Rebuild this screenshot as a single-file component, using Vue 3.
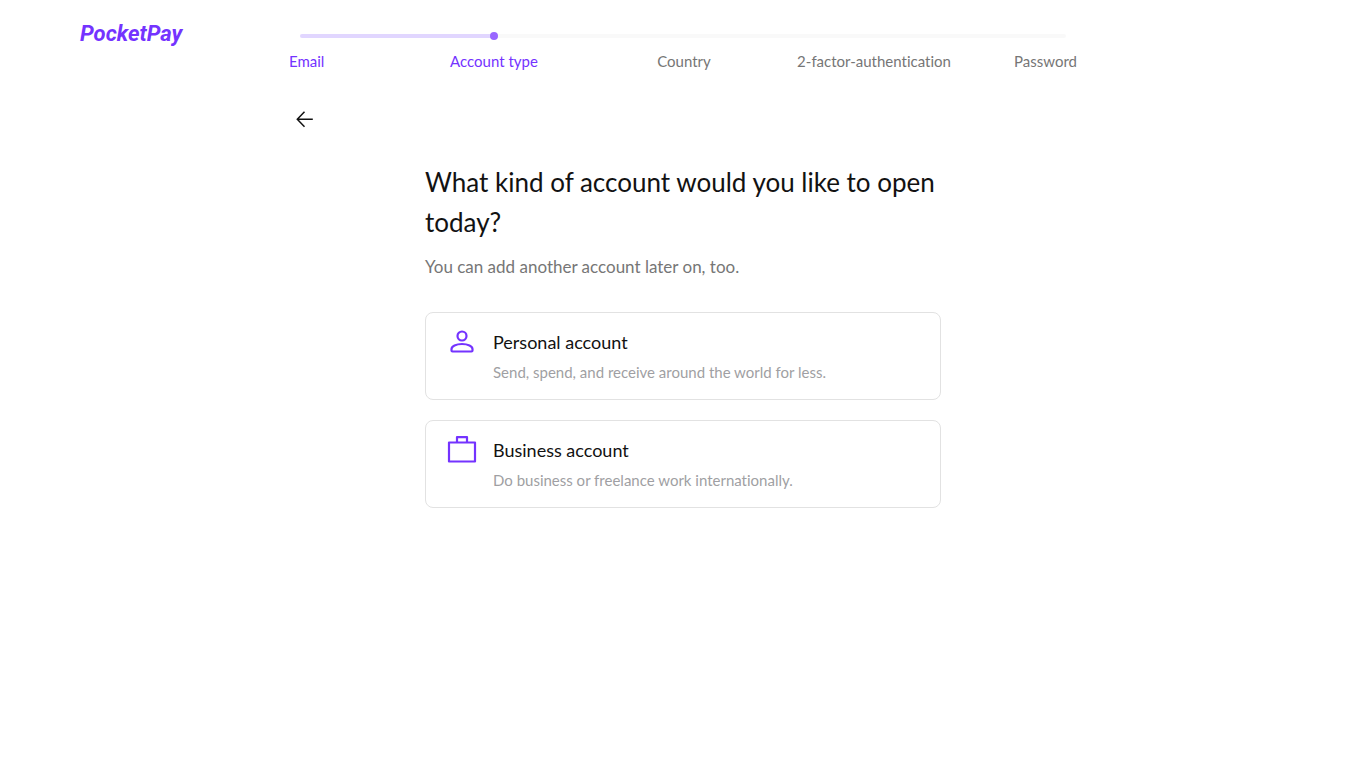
<script setup>
const steps = [
  { label: 'Email', active: true },
  { label: 'Account type', active: true },
  { label: 'Country', active: false },
  { label: '2-factor-authentication', active: false },
  { label: 'Password', active: false },
]

const accounts = [
  { id: 'personal', title: 'Personal account', text: 'Send, spend, and receive around the world for less.' },
  { id: 'business', title: 'Business account', text: 'Do business or freelance work internationally.' },
]
</script>

<template>
  <div class="page">
    <header class="header">
      <a class="logo" href="#">PocketPay</a>
      <nav class="stepper" aria-label="Progress">
        <div class="track">
          <div class="fill"></div>
        </div>
        <ol class="steps">
          <li v-for="step in steps" :key="step.label" class="step" :class="{ active: step.active }">{{ step.label }}</li>
        </ol>
      </nav>
    </header>

    <div class="toolbar">
      <button class="back" type="button" aria-label="Back">
        <svg width="24" height="24" viewBox="0 0 24 24" fill="none" stroke="currentColor" stroke-width="1.5">
          <path d="M19.800 12.300H4.500M11.500 4.800L4.300 12.300L11.500 19.800" />
        </svg>
      </button>
    </div>

    <main class="content">
      <h1>What kind of account would you like to open today?</h1>
      <p class="lead">You can add another account later on, too.</p>
      <button v-for="account in accounts" :key="account.id" class="card" type="button">
        <svg v-if="account.id === 'personal'" class="icon" width="32" height="32" viewBox="0 0 32 32" fill="none" stroke="currentColor" stroke-width="2.2">
          <circle cx="16" cy="10" r="4.5" />
          <path d="M5.500 24.500V23C5.500 20.200 10 18 16 18S26.500 20.200 26.500 23V24.500Q26.500 25.500 25.500 25.500H6.500Q5.500 25.500 5.500 24.500Z" />
        </svg>
        <svg v-else class="icon" width="32" height="32" viewBox="0 0 32 32" fill="none" stroke="currentColor" stroke-width="2.2" stroke-linejoin="round">
          <rect x="3" y="8.500" width="26" height="19" />
          <path d="M11 8.500V3.200H21V8.500" />
        </svg>
        <span class="text">
          <span class="title">{{ account.title }}</span>
          <span class="description">{{ account.text }}</span>
        </span>
      </button>
    </main>
  </div>
</template>

<style>
body {
  margin: 0;
  background: #fff;
}
</style>

<style scoped>
.page {
  font-family: Lato, "Liberation Sans", sans-serif;
  font-variant-ligatures: none;
  color: #121212;
}

.header {
  display: grid;
  grid-template-columns: minmax(0, 1fr) minmax(0, 788px) minmax(0, 1fr);
  padding-top: 20px;
}

.logo {
  justify-self: start;
  margin-left: 80px;
  font-family: Roboto, "Liberation Sans", sans-serif;
  font-size: 22px;
  line-height: 28px;
  font-weight: 700;
  font-style: italic;
  color: #7433ff;
  text-decoration: none;
}

.track {
  height: 4px;
  margin: 14px 11px 0;
  border-radius: 2px;
  background: #f9f9f9;
}

.fill {
  position: relative;
  width: 25.3%;
  height: 4px;
  border-radius: 2px;
  background: #e1d6ff;
}

.fill::after {
  content: "";
  position: absolute;
  top: -2px;
  right: -4px;
  width: 8px;
  height: 8px;
  border-radius: 50%;
  background: #9967ff;
}

.steps {
  display: grid;
  grid-template-columns: 110fr 190fr 190fr 190fr 108fr;
  margin: 13px 0 0;
  padding: 0;
  list-style: none;
  font-size: 15px;
  line-height: 20px;
  color: #767676;
}

.step {
  text-align: center;
  white-space: nowrap;
}

.step:first-child {
  text-align: left;
}

.step:last-child {
  text-align: right;
}

.active {
  color: #7433ff;
}

.toolbar {
  max-width: 788px;
  margin: 36px auto 0;
}

.back {
  display: block;
  margin-left: 4px;
  padding: 0;
  border: 0;
  background: none;
  color: #121212;
}

.back svg {
  display: block;
}

.content {
  display: flex;
  flex-direction: column;
  max-width: 516px;
  margin: 31px auto 0;
}

h1 {
  margin: 0;
  font-size: 26px;
  line-height: 40px;
  font-weight: 400;
}

.lead {
  margin: 13px 0 33px;
  font-size: 17px;
  line-height: 24px;
  color: #767676;
}

.card {
  display: flex;
  gap: 15px;
  margin-bottom: 20px;
  padding: 13px 20px 15px;
  border: 1px solid #e2e2e2;
  border-radius: 8px;
  background: #fff;
  font: inherit;
  color: inherit;
  text-align: left;
}

.icon {
  flex: none;
  color: #7433ff;
}

.text {
  display: flex;
  flex-direction: column;
  gap: 2px;
}

.title {
  font-size: 18px;
  line-height: 32px;
}

.description {
  font-size: 15px;
  line-height: 24px;
  color: #9f9fa3;
}
</style>
